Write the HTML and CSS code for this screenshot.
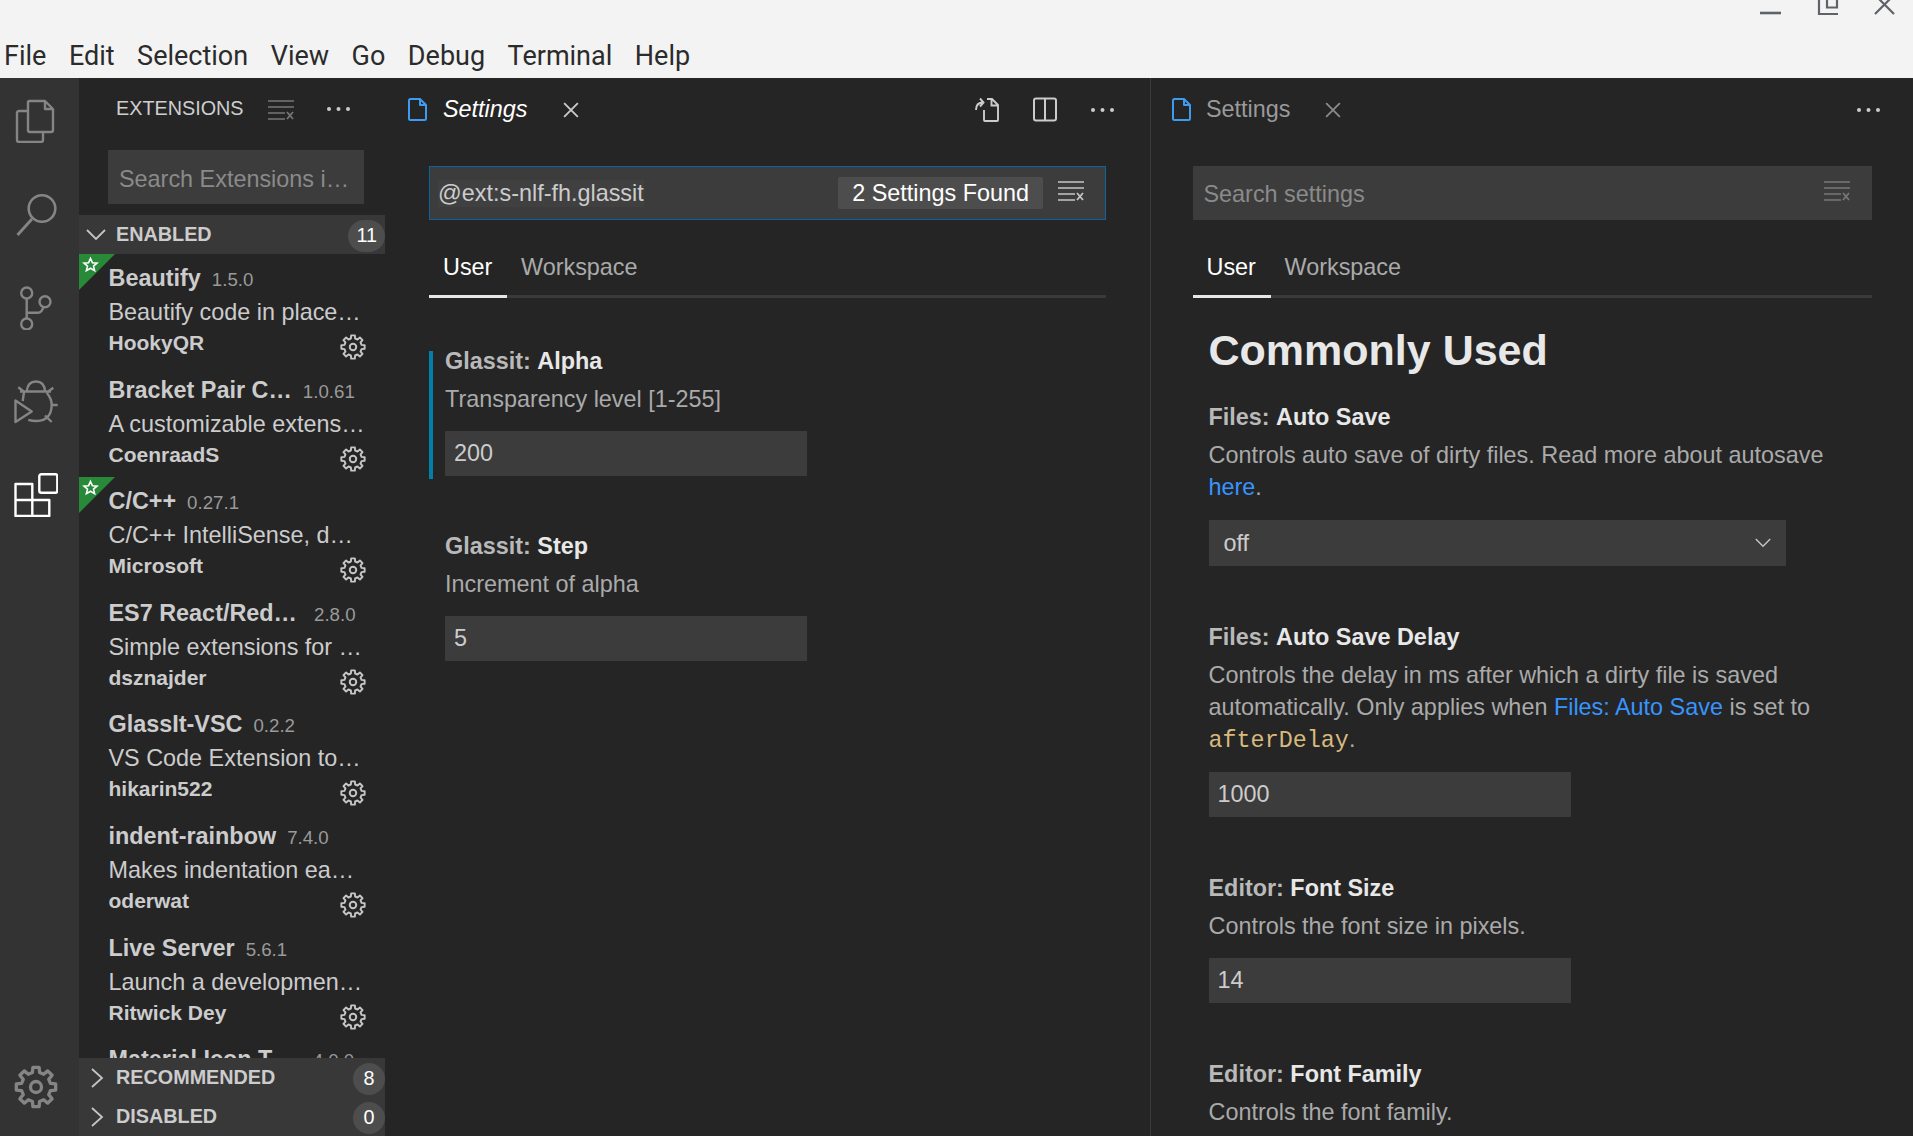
FILE: index.html
```html
<!DOCTYPE html>
<html lang="en">
<head>
<meta charset="utf-8">
<title>Settings</title>
<link rel="stylesheet" href="styles.css">
</head>
<body>
<svg class="defs" width="0" height="0">
  <defs>
    <symbol id="gear" viewBox="0 0 32 32"><path fill="none" stroke="currentColor" stroke-width="2.400" stroke-linejoin="round" d="M13.39 5.520L13.730 1.680H18.270L18.610 5.520L21.560 6.740L24.520 4.270L27.730 7.480L25.260 10.440L26.480 13.390L30.320 13.730V18.270L26.480 18.610L25.260 21.560L27.730 24.520L24.520 27.730L21.560 25.260L18.610 26.480L18.270 30.320H13.730L13.390 26.480L10.440 25.260L7.480 27.730L4.270 24.520L6.740 21.560L5.520 18.610L1.680 18.270V13.730L5.520 13.390L6.740 10.440L4.270 7.480L7.480 4.270L10.440 6.740Z"/><circle cx="16" cy="16" r="4" fill="none" stroke="currentColor" stroke-width="2.400"/></symbol>
    <symbol id="clear" viewBox="0 0 26 20"><path fill="none" stroke="currentColor" stroke-width="1.600" d="M0 1h26M0 7h26M0 13h17M0 19h17"/><path fill="none" stroke="currentColor" stroke-width="1.800" d="M19 12l6 7M25 12l-6 7"/></symbol>
    <symbol id="file" viewBox="0 0 19 23"><path fill="none" stroke="#3d9bf0" stroke-width="2" stroke-linejoin="round" d="M2.500 1H12L18 7V20.500Q18 22 16.500 22H2.500Q1 22 1 20.500V2.500Q1 1 2.500 1ZM12 1V7H18"/></symbol>
    <symbol id="more" viewBox="0 0 23 4"><circle cx="2" cy="2" r="2" fill="currentColor"/><circle cx="11.500" cy="2" r="2" fill="currentColor"/><circle cx="21" cy="2" r="2" fill="currentColor"/></symbol>
    <symbol id="star" viewBox="0 0 36 36"><path fill="#288a39" d="M0 0H36L0 36z"/><path fill="none" stroke="#fff" stroke-width="1.600" d="M11.500 4.500l1.900 4.200 4.600.4-3.500 3 1.100 4.500-4.100-2.400-4.100 2.400 1.100-4.500-3.500-3 4.600-.4z"/></symbol>
  </defs>
</svg>
<header class="titlebar">
  <svg class="winctl" viewBox="0 0 135 16"><path fill="none" stroke="#5f6368" stroke-width="2.600" d="M0 13H21"/><path fill="none" stroke="#5f6368" stroke-width="2.200" d="M59 0V14H78M67 -2V7.500H77V-2"/><path fill="none" stroke="#5f6368" stroke-width="2.200" d="M115 14L134 -5M134 14L115 -5"/></svg>
  <nav class="menubar">
    <span>File</span><span>Edit</span><span>Selection</span><span>View</span><span>Go</span><span>Debug</span><span>Terminal</span><span>Help</span>
  </nav>
</header>
<main class="workbench">
  <aside class="activity">
    <svg class="act" viewBox="0 0 44 44"><path fill="none" stroke="currentColor" stroke-width="2.400" stroke-linejoin="round" d="M15.500 2H31L39 10V31Q39 33 37 33H16Q14 33 14 31V3.500Q14 2 15.500 2ZM31 2V10H39M14 12H5Q3 12 3 14V41Q3 43 5 43H27Q29 43 29 41V33"/></svg>
    <svg class="act" viewBox="0 0 44 44"><circle cx="28" cy="15.500" r="13.300" fill="none" stroke="currentColor" stroke-width="2.600"/><path stroke="currentColor" stroke-width="2.800" d="M18 26L3.500 42"/></svg>
    <svg class="act" viewBox="0 0 44 44"><g fill="none" stroke="currentColor" stroke-width="2.400"><circle cx="12.700" cy="7" r="5.500"/><circle cx="12.700" cy="38" r="5.500"/><circle cx="31" cy="15.700" r="5.500"/><path d="M12.700 12.500V32.500M12.700 26.700H24Q28 26.700 29.300 21"/></g></svg>
    <svg class="act" viewBox="0 0 44 44"><g fill="none" stroke="currentColor" stroke-width="2.400" stroke-linejoin="round"><path d="M1.500 20.500V42L17.700 31.500ZM12.700 11.500Q13.500 1.500 22 1.500T31 11.500M6 11.500H37M4.300 7.200L11 12.500M39.300 7.800L32.700 12.800M10 12L8.700 21M32.700 12.800Q38 19 37.700 25.500Q37 40.500 23 41Q18 41 14.300 39.800M37.700 25H43.700M31 35.500L37.700 42"/></g></svg>
    <svg class="act act-on" viewBox="0 0 44 44"><g fill="none" stroke="currentColor" stroke-width="2.400" stroke-linejoin="round"><rect x="25.300" y="1.300" width="18" height="18.400" rx="2"/><path d="M1.500 11H18.300V27H35.300V43H1.500ZM1.500 27H18.300V43"/></g></svg>
    <svg class="act act-gear"><use href="#gear"/></svg>
  </aside>
  <section class="sidebar">
    <div class="side-title">
      <span class="side-name">EXTENSIONS</span>
      <svg class="clear"><use href="#clear"/></svg>
      <svg class="more"><use href="#more"/></svg>
    </div>
    <div class="side-search">Search Extensions i…</div>
    <div class="pane-head"><svg class="chev" viewBox="0 0 20 20"><path d="M1 5l9 9 9-9"/></svg><b>ENABLED</b><span class="badge">11</span></div>
    <div class="ext-list">
      <article class="ext"><svg class="corner"><use href="#star"/></svg><h3><b>Beautify</b><i>1.5.0</i></h3><p>Beautify code in place…</p><footer><b>HookyQR</b><svg class="mini-gear"><use href="#gear"/></svg></footer></article>
      <article class="ext"><h3><b>Bracket Pair C…</b><i>1.0.61</i></h3><p>A customizable extens…</p><footer><b>CoenraadS</b><svg class="mini-gear"><use href="#gear"/></svg></footer></article>
      <article class="ext"><svg class="corner"><use href="#star"/></svg><h3><b>C/C++</b><i>0.27.1</i></h3><p>C/C++ IntelliSense, d…</p><footer><b>Microsoft</b><svg class="mini-gear"><use href="#gear"/></svg></footer></article>
      <article class="ext"><h3><b>ES7 React/Red…</b><i class="wide">2.8.0</i></h3><p>Simple extensions for …</p><footer><b>dsznajder</b><svg class="mini-gear"><use href="#gear"/></svg></footer></article>
      <article class="ext"><h3><b>GlassIt-VSC</b><i>0.2.2</i></h3><p>VS Code Extension to…</p><footer><b>hikarin522</b><svg class="mini-gear"><use href="#gear"/></svg></footer></article>
      <article class="ext"><h3><b>indent-rainbow</b><i>7.4.0</i></h3><p>Makes indentation ea…</p><footer><b>oderwat</b><svg class="mini-gear"><use href="#gear"/></svg></footer></article>
      <article class="ext"><h3><b>Live Server</b><i>5.6.1</i></h3><p>Launch a developmen…</p><footer><b>Ritwick Dey</b><svg class="mini-gear"><use href="#gear"/></svg></footer></article>
      <article class="ext"><h3><b>Material Icon T…</b><i class="wide">4.0.0</i></h3></article>
    </div>
    <div class="pane-head"><svg class="chev" viewBox="0 0 20 20"><path d="M6 1l10 9-10 9"/></svg><b>RECOMMENDED</b><span class="badge">8</span></div>
    <div class="pane-head"><svg class="chev" viewBox="0 0 20 20"><path d="M6 1l10 9-10 9"/></svg><b>DISABLED</b><span class="badge">0</span></div>
  </section>
  <section class="editor left">
    <div class="tabbar">
      <div class="tab"><svg class="file"><use href="#file"/></svg><em>Settings</em><svg class="close" viewBox="0 0 14 14"><path d="M1 1l12 12M13 1L1 13"/></svg></div>
      <div class="actions">
        <svg class="ed-act" viewBox="0 0 26 26"><path fill="none" stroke="currentColor" stroke-width="1.900" d="M14 2H19L25 8V23Q25 24 24 24H12Q11 24 11 23V13M18.500 2V8.500H25M3 13Q3 5.500 10 5.500M7 1.500L10.500 5.500 7 9.500"/></svg>
        <svg class="ed-act" viewBox="0 0 26 26"><rect x="2" y="1.500" width="22" height="22" rx="2" fill="none" stroke="currentColor" stroke-width="2"/><path stroke="currentColor" stroke-width="2" d="M13 2v21"/></svg>
        <svg class="more"><use href="#more"/></svg>
      </div>
    </div>
    <div class="settings">
      <div class="search focused"><span class="query">@ext:s-nlf-fh.glassit</span><span class="found">2 Settings Found</span><svg class="clear"><use href="#clear"/></svg></div>
      <div class="tabs"><span class="on">User</span><span>Workspace</span></div>
      <div class="item marked"><h4>Glassit: <b>Alpha</b></h4><p>Transparency level [1-255]</p><div class="input">200</div></div>
      <div class="item plain"><h4>Glassit: <b>Step</b></h4><p>Increment of alpha</p><div class="input">5</div></div>
    </div>
  </section>
  <section class="editor right">
    <div class="tabbar">
      <div class="tab dim"><svg class="file"><use href="#file"/></svg><span>Settings</span><svg class="close" viewBox="0 0 14 14"><path d="M1 1l12 12M13 1L1 13"/></svg></div>
      <div class="actions"><svg class="more"><use href="#more"/></svg></div>
    </div>
    <div class="settings">
      <div class="search"><span class="holder">Search settings</span><svg class="clear"><use href="#clear"/></svg></div>
      <div class="tabs"><span class="on">User</span><span>Workspace</span></div>
      <div class="list">
        <h2>Commonly Used</h2>
        <div class="item"><h4>Files: <b>Auto Save</b></h4><p>Controls auto save of dirty files. Read more about autosave <a>here</a>.</p><div class="select">off<svg class="sel-chev" viewBox="0 0 20 12"><path d="M1 1l9 9 9-9"/></svg></div></div>
        <div class="item"><h4>Files: <b>Auto Save Delay</b></h4><p>Controls the delay in ms after which a dirty file is saved automatically. Only applies when <a>Files: Auto Save</a> is set to <code>afterDelay</code>.</p><div class="input">1000</div></div>
        <div class="item"><h4>Editor: <b>Font Size</b></h4><p>Controls the font size in pixels.</p><div class="input">14</div></div>
        <div class="item"><h4>Editor: <b>Font Family</b></h4><p>Controls the font family.</p></div>
      </div>
    </div>
  </section>
</main>
</body>
</html>
```
FILE: styles.css
```css
* { box-sizing: border-box; }
html, body { margin: 0; height: 100%; }
body { width: 1913px; height: 1136px; overflow: hidden; font-family: "Liberation Sans", Arial, sans-serif; background: #252526; color: #ccc; display: flex; flex-direction: column; }
.defs { position: absolute; }
h2, h3, h4, p { margin: 0; }

.titlebar { height: 78px; flex: none; background: #f3f3f3; color: #333; position: relative; }
.winctl { position: absolute; left: 1760px; top: 0; width: 135px; height: 16px; overflow: hidden; }
.menubar { height: 78px; display: flex; align-items: flex-end; font-family: Roboto, sans-serif; font-size: 27px; line-height: 40px; gap: 22.500px; padding: 0 0 2px 4px; color: #2b2b2b; }

.workbench { flex: 1; display: flex; min-height: 0; }
.activity { width: 79px; flex: none; background: #333; display: flex; flex-direction: column; align-items: center; color: #858585; padding: 21px 7px 0 0; gap: 49.500px; }
.act { width: 44px; height: 44px; display: block; flex: none; }
.act-on { color: #fff; }
.act-gear { margin-top: auto; margin-bottom: 27px; }

.sidebar { width: 306px; flex: none; background: #252526; display: flex; flex-direction: column; }
.side-title { height: 60px; display: flex; align-items: center; padding-left: 37px; flex: none; }
.side-name { font-size: 19.800px; color: #cfcfcf; }
.clear { width: 26px; height: 20px; color: #777; display: block; flex: none; }
.side-title .clear { margin-left: 24px; margin-top: 3px; }
.more { width: 23px; height: 4px; display: block; color: #ccc; flex: none; }
.side-title .more { margin-left: 33px; margin-top: 2px; }
.side-search { height: 54px; margin: 12px 21px 0 29px; width: 256px; background: #3c3c3c; color: #8a8a8a; font-size: 23.400px; line-height: 58px; padding-left: 11px; flex: none; white-space: nowrap; overflow: hidden; }
.pane-head { height: 39px; flex: none; background: #383838; display: flex; align-items: center; position: relative; padding-left: 37px; color: #ccc; font-size: 19.800px; }
.sidebar .side-search + .pane-head { margin-top: 11px; }
.chev { position: absolute; left: 7px; top: 10px; width: 20px; height: 20px; fill: none; stroke: #c5c5c5; stroke-width: 1.800; }
.badge { margin-left: auto; margin-top: 2px; min-width: 32px; height: 32px; border-radius: 16px; background: #4d4d4d; color: #fff; font-size: 19.800px; line-height: 30px; text-align: center; padding: 0 8px; font-weight: normal; }
.ext-list { flex: 1; min-height: 0; overflow: hidden; }
.ext { height: 111.600px; padding: 8px 19px 0 29.500px; position: relative; }
.corner { position: absolute; left: 0; top: 0; width: 36px; height: 36px; }
.ext h3 { font-size: 23.400px; line-height: 33px; color: #ccc; display: flex; align-items: baseline; white-space: nowrap; }
.ext h3 i { font-style: normal; font-weight: normal; font-size: 18.700px; color: #9a9a9a; margin-left: 11px; }
.ext h3 i.wide { margin-left: 17px; }
.ext p { font-size: 23.400px; line-height: 33px; white-space: nowrap; color: #ccc; }
.ext footer { display: flex; align-items: flex-start; justify-content: space-between; font-size: 21px; line-height: 27px; color: #ccc; }
.mini-gear { width: 26px; height: 26px; color: #c5c5c5; margin-top: 5px; }

.editor { display: flex; flex-direction: column; background: #252525; min-width: 0; }
.left { width: 766px; flex: none; border-right: 1px solid #3a3a3a; }
.right { flex: 1; }
.tabbar { height: 60px; padding-top: 3px; display: flex; align-items: center; flex: none; }
.tab { display: flex; align-items: center; font-size: 23.400px; color: #fff; }
.left .tab { padding-left: 23px; }
.right .tab { padding-left: 21px; }
.tab.dim { color: #9a9a9a; }
.file { width: 19px; height: 23px; display: block; margin-right: 16px; }
.dim .file { margin-right: 15px; }
.tab em { font-style: italic; }
.close { width: 16px; height: 16px; fill: none; stroke: #ccc; stroke-width: 1.600; margin-left: 35px; }
.dim .close { stroke: #8a8a8a; margin-left: 34px; }
.actions { margin-left: auto; display: flex; align-items: center; gap: 33px; color: #ccc; padding-right: 36px; }
.right .actions { padding-right: 33px; }
.ed-act { width: 26px; height: 26px; display: block; }

.settings { padding: 28px 44px 0 44px; min-width: 0; }
.right .settings { padding: 28px 41.500px 0 41.500px; }
.search { height: 54px; background: #3c3c3c; display: flex; align-items: center; font-size: 23.400px; padding: 0 21px 0 8px; border: 1px solid transparent; }
.search.focused { border-color: #0e639c; }
.search .clear { margin-top: -4px; color: #777; }
.focused .clear { color: #c5c5c5; }
.query { color: #ccc; background: #404040; }
.holder { color: #8a8a8a; margin-top: 3px; margin-left: 2px; }
.found { margin-left: auto; background: #4d4d4d; color: #fff; height: 32px; line-height: 32px; padding: 0 14px; border-radius: 2px; margin-right: 15px; }
.right .search .clear { margin-left: auto; }

.tabs { height: 58px; margin-top: 20px; border-bottom: 3px solid #3a3a3a; display: flex; font-size: 23.400px; line-height: 55px; color: #aaa; }
.tabs span { padding: 0 14px; height: 58px; }
.tabs span.on { color: #fff; border-bottom: 3px solid #e7e7e7; width: 78px; }

.item h4 { font-size: 23.400px; line-height: 20px; font-weight: bold; color: #b9b9b9; }
.item h4 b { color: #e8e8e8; }
.item p { font-size: 23.400px; line-height: 32px; color: #aaa; margin-top: 12px; }
.item a { color: #3794ff; }
.item code { font-family: "Liberation Mono", monospace; color: #d7ba7d; }
.input { width: 362px; height: 45px; background: #3c3c3c; color: #ccc; font-size: 23.400px; line-height: 45px; padding-left: 9px; margin-top: 15.500px; }
.select { width: 577px; height: 46px; background: #3c3c3c; color: #ccc; font-size: 23.400px; line-height: 46px; padding-left: 15px; margin-top: 16.500px; position: relative; }
.sel-chev { position: absolute; right: 15px; top: 18.500px; width: 16px; height: 10px; fill: none; stroke: #c5c5c5; stroke-width: 1.800; }

.marked { margin-top: 52.500px; border-left: 4px solid #007fa8; padding: 0 0 3px 12px; }
.marked h4, .plain h4 { margin-bottom: 1.500px; }
.marked .input, .plain .input { margin-top: 16px; }
.plain { margin-top: 57.500px; padding-left: 16px; }
.list { padding-left: 16px; }
h2 { font-size: 43px; line-height: 52px; color: #e8e8e8; margin-top: 26px; margin-bottom: 31px; }
.list .item { margin-bottom: 61px; }
```
